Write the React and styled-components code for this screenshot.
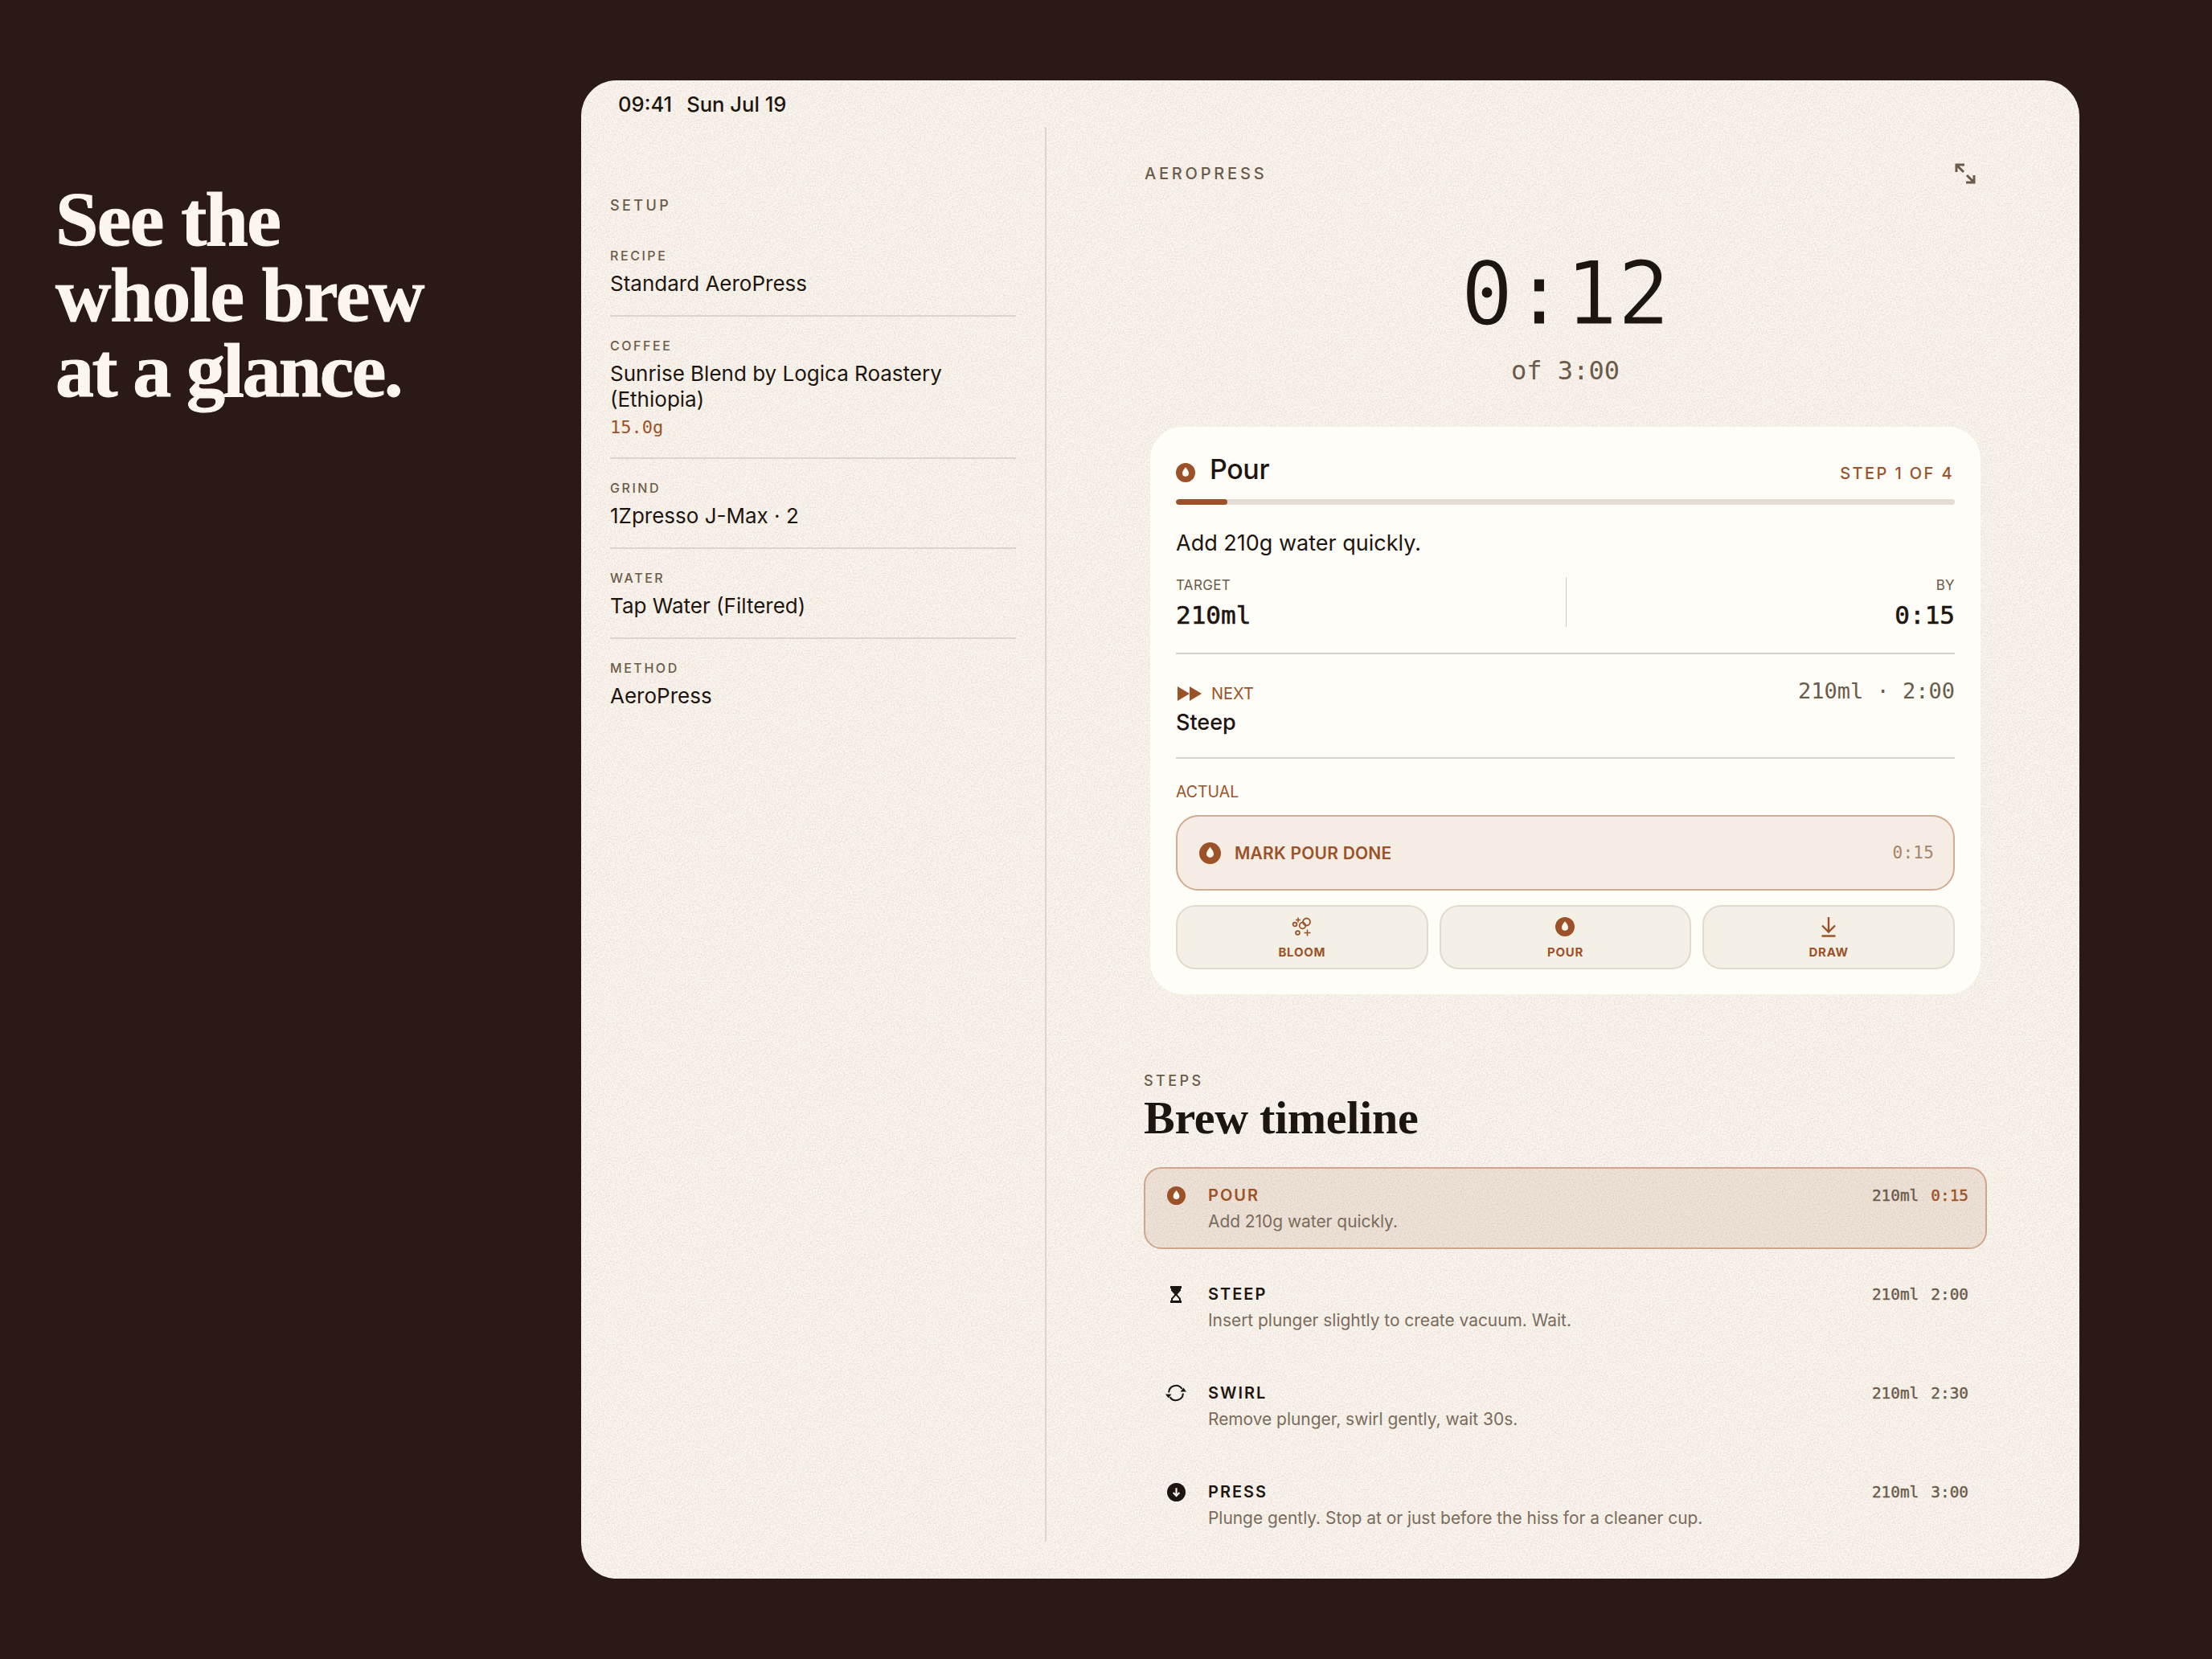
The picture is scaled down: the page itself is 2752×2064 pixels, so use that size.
import React from 'react';
import styled, { createGlobalStyle } from 'styled-components';

const sans = `Inter, "Liberation Sans", sans-serif`;
const mono = `"DejaVu Sans Mono", "Liberation Mono", monospace`;
const serif = `"Liberation Serif", serif`;

const rust = '#9c5229';
const ink = '#1f1510';
const muted = '#6b5b4b';
const paper = '#f5efe6';

const grain = `url("data:image/svg+xml,%3Csvg xmlns='http://www.w3.org/2000/svg' width='400' height='400'%3E%3Cfilter id='n' color-interpolation-filters='sRGB'%3E%3CfeTurbulence type='fractalNoise' baseFrequency='0.55' numOctaves='3' stitchTiles='stitch'/%3E%3CfeColorMatrix values='0 0 0 0 0.5 0 0 0 0 0.42 0 0 0 0 0.32 0.35 0 0 0 -0.13'/%3E%3C/filter%3E%3Crect width='400' height='400' filter='url(%23n)'/%3E%3C/svg%3E")`;

const Global = createGlobalStyle`
  html, body { margin: 0; padding: 0; background: #2a1a13; }
  * { box-sizing: border-box; }
`;

const Page = styled.div`
  width: 2752px;
  height: 2064px;
  background: #2a1a13;
  display: flex;
  font-family: ${sans};
  color: ${ink};
  overflow: hidden;
`;

const Aside = styled.div`
  width: 723px;
  flex: none;
  padding: 226px 0 0 69px;
`;

const Headline = styled.h1`
  margin: 0;
  font-family: ${serif};
  font-weight: 700;
  font-size: 96px;
  line-height: 94px;
  -webkit-text-stroke: 1px #fdf6ec;
  color: #fdf6ec;
`;

const HeadLine = styled.span`
  display: block;
  letter-spacing: ${p => p.$tracking}px;
`;

const Device = styled.div`
  margin-top: 100px;
  width: 1864px;
  height: 1864px;
  flex: none;
  border-radius: 44px;
  background-color: #fbf6ef;
  background-image: ${grain};
  display: flex;
  flex-direction: column;
  overflow: hidden;
`;

const StatusBar = styled.div`
  height: 58px;
  flex: none;
  padding-left: 46px;
  display: flex;
  align-items: center;
  gap: 18px;
  font-size: 25.6px;
  font-weight: 500;
  color: ${ink};
`;

const Columns = styled.div`
  height: 1760px;
  flex: none;
  display: flex;
`;

const Sidebar = styled.div`
  width: 579px;
  flex: none;
  border-right: 2px solid #ddd5c9;
  padding: 86px 36px 0;
`;

const Eyebrow = styled.div`
  font-size: ${p => p.$size || 18}px;
  font-weight: 500;
  letter-spacing: 0.19em;
  line-height: 24px;
  color: ${muted};
`;

const SetupList = styled.div`
  margin-top: 23px;
`;

const Field = styled.div`
  padding: 26px 0 23px;
  border-bottom: 2px solid #dcd4c8;
  &:last-child { border-bottom: none; }
  &:first-child { padding-top: 17px; }
`;

const FieldLabel = styled.div`
  font-size: 16px;
  font-weight: 500;
  letter-spacing: 0.16em;
  line-height: 20px;
  color: ${muted};
`;

const FieldValue = styled.div`
  margin-top: 9px;
  font-size: 26px;
  line-height: 32px;
  color: ${ink};
`;

const Dose = styled.div`
  margin-top: 5px;
  font-family: ${mono};
  font-size: 22px;
  line-height: 28px;
  color: ${rust};
`;

const Main = styled.div`
  flex: 1;
  min-width: 0;
  padding: 45px 115px 0 121px;
`;

const MainHeader = styled.div`
  display: flex;
  justify-content: space-between;
  align-items: center;
  height: 26px;
  padding: 0 14px 0 1px;
`;

const Timer = styled.div`
  margin-top: 72px;
  text-align: center;
`;

const TimerValue = styled.div`
  font-family: ${mono};
  font-size: 108px;
  font-weight: 400;
  line-height: 130px;
  color: ${ink};
  -webkit-text-stroke: 1.2px ${paper};
`;

const TimerTotal = styled.div`
  margin-top: 10px;
  font-family: ${mono};
  font-size: 32px;
  line-height: 40px;
  color: ${muted};
`;

const Card = styled.div`
  margin: 50px 8px 0;
  height: 706px;
  padding: 32px;
  background: #fefdf8;
  border-radius: 40px;
`;

const CardHead = styled.div`
  display: flex;
  align-items: center;
  justify-content: space-between;
  height: 44px;
`;

const CardTitle = styled.div`
  display: flex;
  align-items: center;
  gap: 18px;
  padding-bottom: 4px;
  font-size: 34px;
  font-weight: 500;
  letter-spacing: -0.4px;
  svg { margin-top: 10px; }
`;

const StepCount = styled.div`
  margin-top: 8px;
  padding-right: 1px;
  font-size: 20px;
  font-weight: 500;
  letter-spacing: 0.12em;
  color: ${rust};
`;

const Track = styled.div`
  margin-top: 14px;
  height: 7px;
  border-radius: 4px;
  background: #e5ddd3;
  overflow: hidden;
`;

const Fill = styled.div`
  height: 100%;
  border-radius: 4px;
  background: ${rust};
`;

const Instruction = styled.div`
  margin-top: 30px;
  font-size: 27px;
  line-height: 36px;
`;

const Targets = styled.div`
  margin-top: 24px;
  height: 94px;
  display: grid;
  grid-template-columns: 1fr 1fr;
`;

const TargetCell = styled.div`
  height: 62px;
  text-align: ${p => (p.$right ? 'right' : 'left')};
  border-left: ${p => (p.$right ? '1px solid #cfcac3' : 'none')};
`;

const TargetLabel = styled.div`
  font-size: 17px;
  line-height: 20px;
  letter-spacing: 0.02em;
  color: ${muted};
`;

const TargetValue = styled.div`
  margin-top: 8px;
  font-family: ${mono};
  font-size: 31px;
  font-weight: 400;
  line-height: 38px;
  -webkit-text-stroke: 0.6px ${ink};
`;

const Rule = styled.div`
  height: 2px;
  background: #d6d2cc;
`;

const NextRow = styled.div`
  height: 128px;
  padding-top: 30px;
  display: flex;
  justify-content: space-between;
`;

const NextLabel = styled.div`
  display: flex;
  align-items: center;
  gap: 12px;
  height: 30px;
  margin-top: 4px;
  padding-left: 2px;
  font-size: 20px;
  color: ${rust};
`;

const NextName = styled.div`
  margin-top: 3px;
  font-size: 27px;
  font-weight: 500;
  line-height: 36px;
`;

const NextMeta = styled.div`
  font-family: ${mono};
  font-size: 27px;
  line-height: 32px;
  color: ${muted};
`;

const ActualLabel = styled.div`
  margin-top: 29px;
  font-size: 19.5px;
  line-height: 24px;
  color: ${rust};
`;

const MarkButton = styled.div`
  margin-top: 17px;
  height: 94px;
  padding: 0 24px 0 27px;
  display: flex;
  align-items: center;
  gap: 17px;
  border: 2px solid #d3ab92;
  border-radius: 28px;
  background: #f5ede3;
  font-size: 21px;
  font-weight: 600;
  letter-spacing: 0.01em;
  color: ${rust};
`;

const MarkTime = styled.span`
  margin-left: auto;
  font-family: ${mono};
  font-size: 21px;
  font-weight: 400;
  color: #a5846b;
`;

const Actions = styled.div`
  margin-top: 18px;
  display: grid;
  grid-template-columns: repeat(3, 1fr);
  gap: 14px;
`;

const ActionButton = styled.div`
  height: 80px;
  padding-top: 12px;
  display: flex;
  flex-direction: column;
  align-items: center;
  gap: 11px;
  border: 2px solid #e2dace;
  border-radius: 24px;
  background: #f5f0e6;
  font-size: 15px;
  font-weight: 700;
  line-height: 16px;
  letter-spacing: 0.05em;
  color: ${rust};
`;

const ActionIcon = styled.div`
  height: 26px;
  display: flex;
  align-items: center;
  justify-content: center;
`;

const StepsHead = styled.div`
  margin-top: 96px;
`;

const StepsTitle = styled.h2`
  margin: 2px 0 0;
  font-family: ${serif};
  font-size: 58px;
  font-weight: 700;
  line-height: 64px;
  letter-spacing: -0.3px;
  color: ${ink};
`;

const Timeline = styled.div`
  margin-top: 29px;
  display: flex;
  flex-direction: column;
  gap: 21px;
`;

const Row = styled.div`
  height: 102px;
  padding: 17px 21px 0 25px;
  display: flex;
  gap: 27px;
  border: 2px solid ${p => (p.$active ? '#cfa68d' : 'transparent')};
  border-radius: 22px;
  background: ${p => (p.$active ? 'rgba(156, 82, 41, 0.11)' : 'transparent')};
`;

const RowIcon = styled.div`
  width: 26px;
  height: 32px;
  flex: none;
  display: flex;
  align-items: center;
  justify-content: center;
`;

const RowBody = styled.div`
  flex: 1;
  min-width: 0;
`;

const RowTop = styled.div`
  display: flex;
  justify-content: space-between;
  align-items: center;
  height: 32px;
`;

const RowTitle = styled.div`
  font-size: 20px;
  font-weight: 600;
  letter-spacing: 0.1em;
  color: ${p => (p.$active ? rust : ink)};
`;

const RowMeta = styled.div`
  display: flex;
  gap: 15px;
  font-family: ${mono};
  font-size: 19.4px;
  -webkit-text-stroke: 0.4px ${muted};
  color: ${muted};
`;

const RowTime = styled.span`
  color: ${p => (p.$active ? rust : muted)};
  -webkit-text-stroke-color: ${p => (p.$active ? rust : muted)};
`;

const RowDesc = styled.div`
  margin-top: 3px;
  font-size: 20.9px;
  line-height: 28px;
  color: #7a6b5c;
`;

const DropIcon = ({ size = 26, color = rust }) => (
  <svg width={size} height={size} viewBox="0 0 24 24">
    <circle cx="12" cy="12" r="12" fill={color} />
    <path d="M12 5.2c2.3 3 4 5.2 4 7.6a4 4 0 0 1-8 0c0-2.4 1.7-4.6 4-7.6z" fill="#fdf8f0" />
  </svg>
);

const ExpandIcon = () => (
  <svg width="26" height="26" viewBox="0 0 26 26" fill="none" stroke={muted} strokeWidth="3">
    <path d="M2 11V2h10M2 2l9 9M24 15v9H14M24 24l-9-9" />
  </svg>
);

const ForwardIcon = () => (
  <svg width="30" height="18" viewBox="0 0 30 18" fill={rust}>
    <path d="M0 0l15 9-15 9zM15 0l15 9-15 9z" />
  </svg>
);

const BloomIcon = () => (
  <svg width="26" height="26" viewBox="0 0 26 26" fill="none" stroke={rust} strokeWidth="1.8">
    <circle cx="18.5" cy="7" r="4.5" />
    <circle cx="13.5" cy="11.5" r="3.8" />
    <circle cx="4" cy="10" r="2.4" />
    <circle cx="7.5" cy="20.5" r="2.4" />
    <path d="M8 1.5v6M5 4.5h6M19.5 16.5v8M15.5 20.5h8" strokeWidth="1.6" />
  </svg>
);

const DrawIcon = () => (
  <svg width="26" height="26" viewBox="0 0 26 26" fill="none" stroke={rust} strokeWidth="2.4">
    <path d="M13 1v18M5 11.5l8 8 8-8M4.5 24.5h17" />
  </svg>
);

const HourglassIcon = () => (
  <svg width="14" height="21" viewBox="0 0 14 21">
    <path d="M0 0h14v3h-1v2.5L8.6 10.5l4.4 5V18h1v3H0v-3h1v-2.5l4.4-5L1 5.5V3H0z" fill={ink} />
    <path d="M3 16.2l4-4.4 4 4.4V18H3z" fill={paper} />
  </svg>
);

const SwirlIcon = () => (
  <svg width="28" height="24" viewBox="0 0 28 24" fill="none" stroke={ink} strokeWidth="2.2">
    <path d="M4.5 11.5a9.5 9.5 0 0 1 17.5-5M23.5 12.5a9.5 9.5 0 0 1-17.5 5" />
    <path d="M20 10.5h8l-4-5.5zM8 13.5H0l4 5.5z" fill={ink} stroke="none" />
  </svg>
);

const PressIcon = () => (
  <svg width="23" height="23" viewBox="0 0 24 24">
    <circle cx="12" cy="12" r="12" fill={ink} />
    <path d="M12 6.5v10M8 12.6l4 4 4-4" fill="none" stroke="#fdf8f0" strokeWidth="2.2" />
  </svg>
);

const setup = [
  { label: 'RECIPE', value: 'Standard AeroPress' },
  { label: 'COFFEE', value: 'Sunrise Blend by Logica Roastery (Ethiopia)', dose: '15.0g' },
  { label: 'GRIND', value: '1Zpresso J-Max · 2' },
  { label: 'WATER', value: 'Tap Water (Filtered)' },
  { label: 'METHOD', value: 'AeroPress' },
];

const steps = [
  { name: 'POUR', desc: 'Add 210g water quickly.', time: '0:15', icon: <DropIcon size={23} />, active: true },
  { name: 'STEEP', desc: 'Insert plunger slightly to create vacuum. Wait.', time: '2:00', icon: <HourglassIcon /> },
  { name: 'SWIRL', desc: 'Remove plunger, swirl gently, wait 30s.', time: '2:30', icon: <SwirlIcon /> },
  { name: 'PRESS', desc: 'Plunge gently. Stop at or just before the hiss for a cleaner cup.', time: '3:00', icon: <PressIcon /> },
];

const App = () => {
  return (
    <Page>
      <Global />
      <Aside>
        <Headline>
          <HeadLine $tracking={-1.6}>See the</HeadLine>
          <HeadLine $tracking={-1.2}>whole brew</HeadLine>
          <HeadLine $tracking={-2.6}>at a glance.</HeadLine>
        </Headline>
      </Aside>
      <Device>
        <StatusBar><span>09:41</span><span>Sun Jul 19</span></StatusBar>
        <Columns>
          <Sidebar>
            <Eyebrow>SETUP</Eyebrow>
            <SetupList>
              {setup.map(f => (
                <Field key={f.label}>
                  <FieldLabel>{f.label}</FieldLabel>
                  <FieldValue>{f.value}</FieldValue>
                  {f.dose && <Dose>{f.dose}</Dose>}
                </Field>
              ))}
            </SetupList>
          </Sidebar>
          <Main>
            <MainHeader>
              <Eyebrow $size={20}>AEROPRESS</Eyebrow>
              <ExpandIcon />
            </MainHeader>
            <Timer>
              <TimerValue>0:12</TimerValue>
              <TimerTotal>of 3:00</TimerTotal>
            </Timer>
            <Card>
              <CardHead>
                <CardTitle><DropIcon size={24} />Pour</CardTitle>
                <StepCount>STEP 1 OF 4</StepCount>
              </CardHead>
              <Track><Fill style={{ width: '6.6%' }} /></Track>
              <Instruction>Add 210g water quickly.</Instruction>
              <Targets>
                <TargetCell>
                  <TargetLabel>TARGET</TargetLabel>
                  <TargetValue>210ml</TargetValue>
                </TargetCell>
                <TargetCell $right>
                  <TargetLabel>BY</TargetLabel>
                  <TargetValue>0:15</TargetValue>
                </TargetCell>
              </Targets>
              <Rule />
              <NextRow>
                <div>
                  <NextLabel><ForwardIcon />NEXT</NextLabel>
                  <NextName>Steep</NextName>
                </div>
                <NextMeta>210ml · 2:00</NextMeta>
              </NextRow>
              <Rule />
              <ActualLabel>ACTUAL</ActualLabel>
              <MarkButton>
                <DropIcon size={27} />
                MARK POUR DONE
                <MarkTime>0:15</MarkTime>
              </MarkButton>
              <Actions>
                <ActionButton><ActionIcon><BloomIcon /></ActionIcon>BLOOM</ActionButton>
                <ActionButton><ActionIcon><DropIcon size={24} /></ActionIcon>POUR</ActionButton>
                <ActionButton><ActionIcon><DrawIcon /></ActionIcon>DRAW</ActionButton>
              </Actions>
            </Card>
            <StepsHead>
              <Eyebrow>STEPS</Eyebrow>
              <StepsTitle>Brew timeline</StepsTitle>
            </StepsHead>
            <Timeline>
              {steps.map(s => (
                <Row key={s.name} $active={s.active}>
                  <RowIcon>{s.icon}</RowIcon>
                  <RowBody>
                    <RowTop>
                      <RowTitle $active={s.active}>{s.name}</RowTitle>
                      <RowMeta><span>210ml</span><RowTime $active={s.active}>{s.time}</RowTime></RowMeta>
                    </RowTop>
                    <RowDesc>{s.desc}</RowDesc>
                  </RowBody>
                </Row>
              ))}
            </Timeline>
          </Main>
        </Columns>
      </Device>
    </Page>
  );
};

export default App;
